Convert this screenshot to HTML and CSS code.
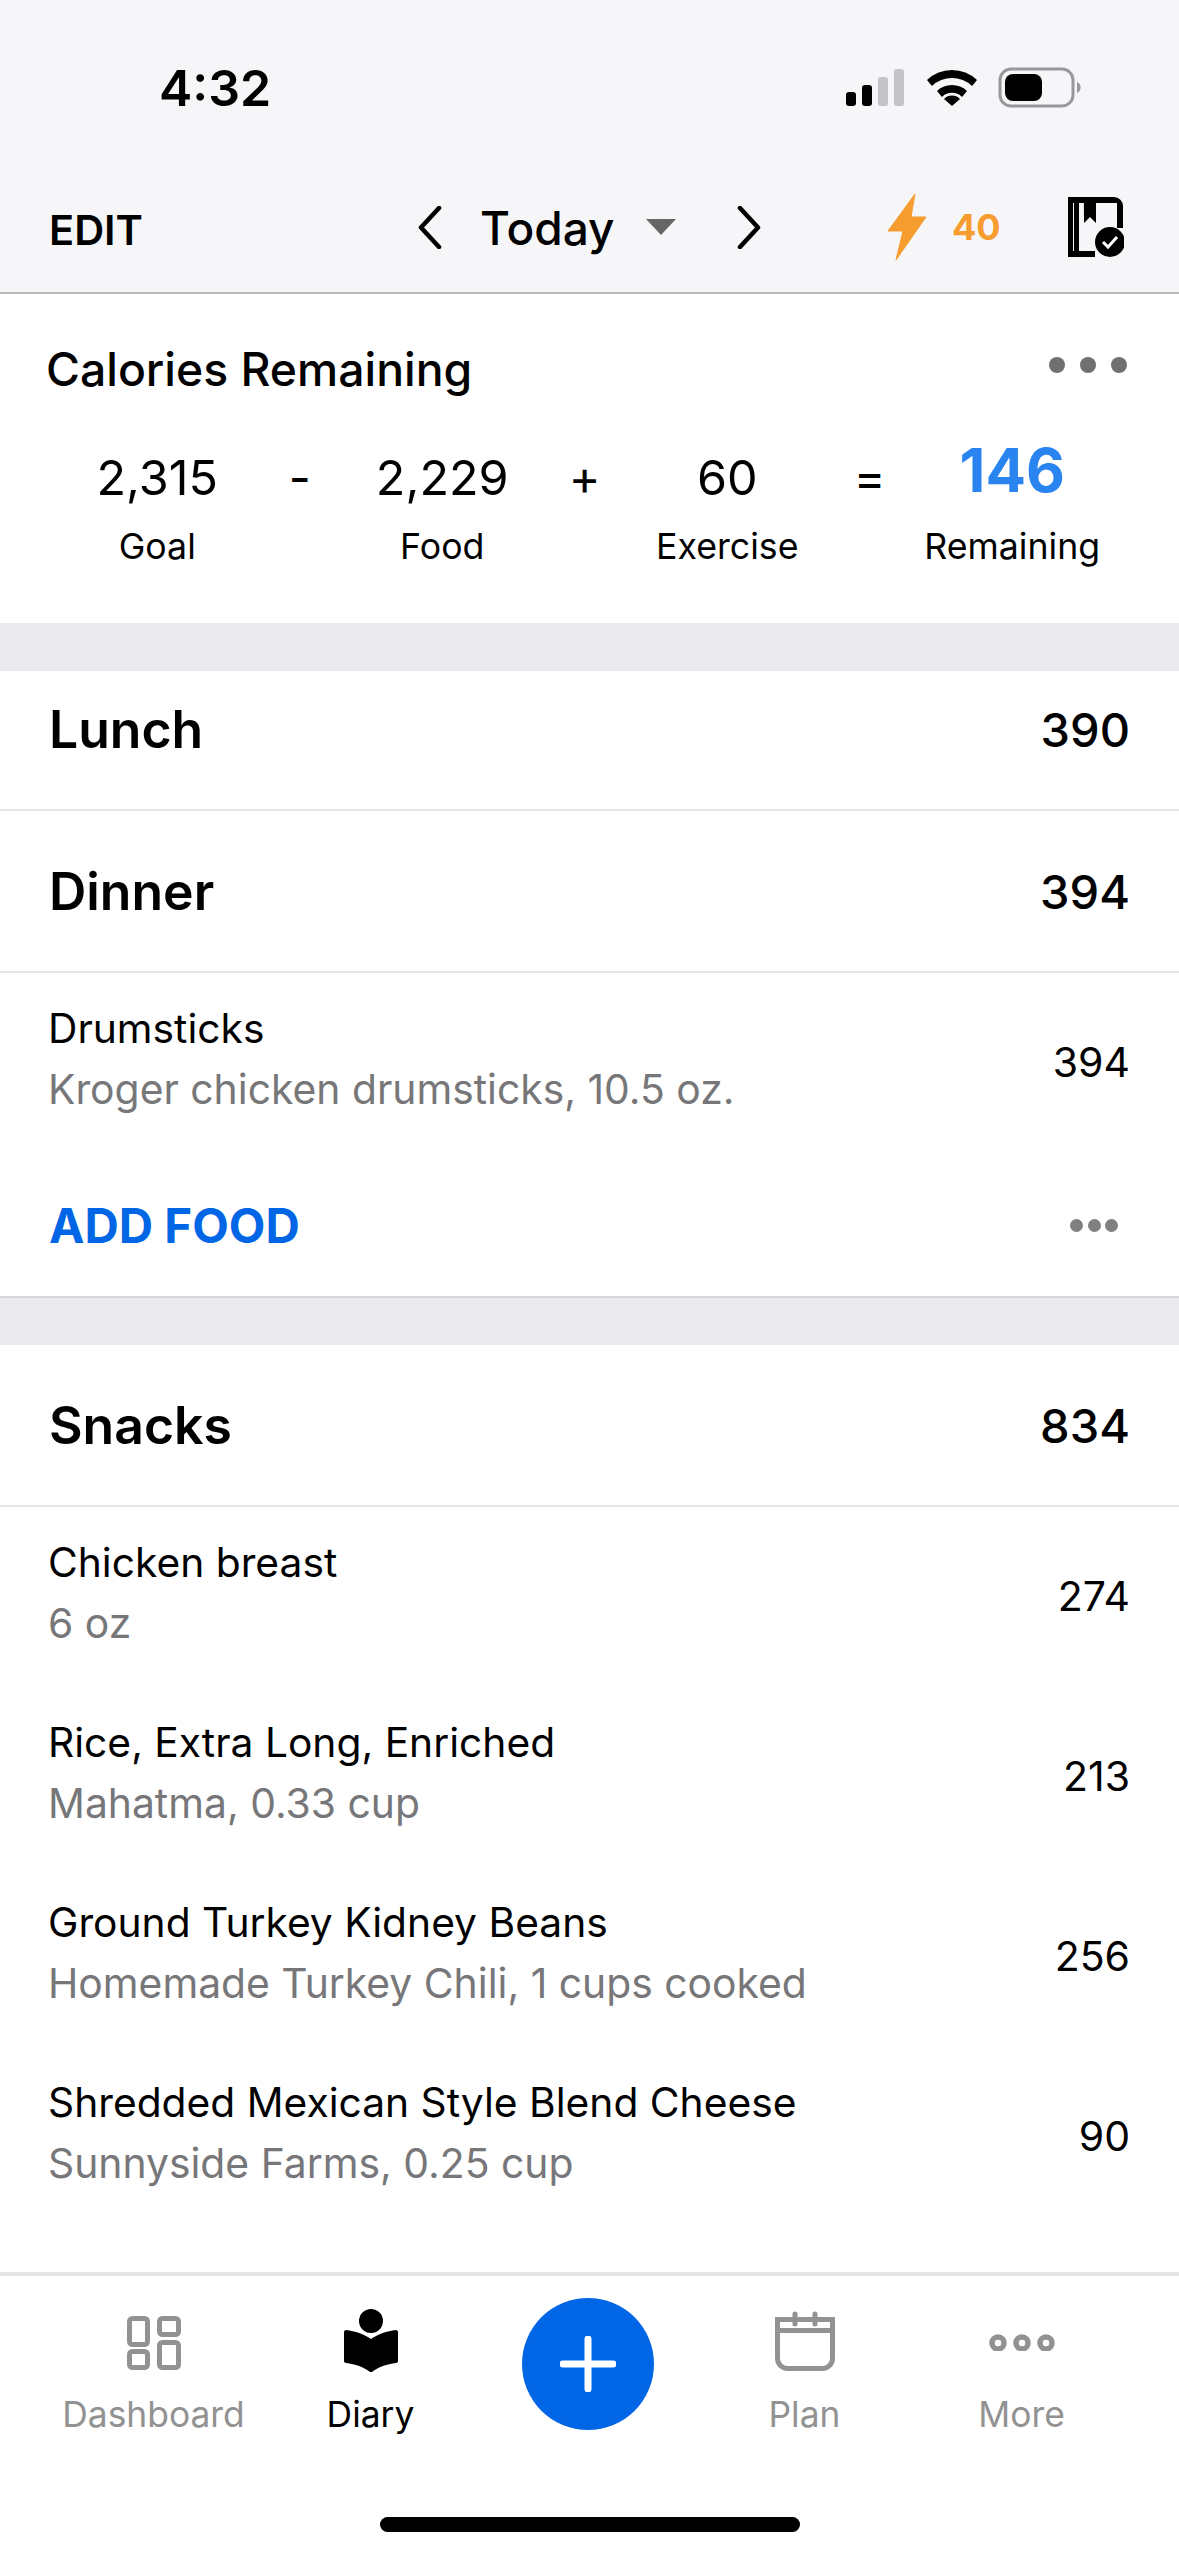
FILE: index.html
```html
<!DOCTYPE html>
<html lang="en">
<head>
  <meta charset="UTF-8">
  <title>Diary</title>
  <link rel="stylesheet" href="styles.css">
</head>
<body>
  <header class="top">
    <div class="status">
      <span class="time">4:32</span>
      <svg class="status-icons" width="240" height="42" viewBox="846 67 240 42">
        <rect x="846" y="92" width="10" height="14" rx="3" fill="#000"/>
        <rect x="862" y="85" width="10" height="21" rx="3" fill="#000"/>
        <rect x="878" y="77" width="10" height="29" rx="3" fill="#c4c4c6"/>
        <rect x="894" y="69" width="10" height="37" rx="3" fill="#c4c4c6"/>
        <path d="M927 80a36 36 0 0 1 50 0l-5 6a29 29 0 0 0-40 0zM937 91a22 22 0 0 1 30 0l-5 6a14 14 0 0 0-20 0zM952 106l-8-7a11 11 0 0 1 16 0z" fill="#000"/>
        <rect x="1000" y="69" width="73" height="37" rx="11" fill="none" stroke="#98989b" stroke-width="3"/>
        <rect x="1005" y="74" width="37" height="27" rx="8" fill="#000"/>
        <path d="M1077 82a6 6 0 0 1 0 11z" fill="#98989b"/>
      </svg>
    </div>
    <div class="bar">
      <span class="edit">EDIT</span>
      <svg class="chev-left" width="25" height="43" viewBox="0 0 25 43"><path d="M22 2 4 21.500 22 41" fill="none" stroke="#000" stroke-width="4.500" stroke-linecap="round" stroke-linejoin="round"/></svg>
      <span class="today">Today</span>
      <span class="caret"></span>
      <svg class="chev-right" width="25" height="43" viewBox="0 0 25 43"><path d="M3 2 21 21.500 3 41" fill="none" stroke="#000" stroke-width="4.500" stroke-linecap="round" stroke-linejoin="round"/></svg>
      <svg class="bolt" width="40" height="66" viewBox="0 0 40 66"><path d="M28 0 1 37h15L9 66l30-43H24z" fill="#f79c2e" stroke="#f79c2e" stroke-width="1" stroke-linejoin="round"/></svg>
      <span class="streak">40</span>
      <svg class="plan-icon" width="56" height="60" viewBox="0 0 56 60">
        <path d="M0 0h46a9 9 0 0 1 9 9v22h-6V6H28v20l-6-6-6 6-.1-20H11v48h16v6H0zM5 6v48h1V6z" fill="#000" fill-rule="evenodd"/>
        <circle cx="42" cy="45" r="15" fill="#000"/>
        <path d="M35 45l5 5 9-10" fill="none" stroke="#fff" stroke-width="3"/>
      </svg>
    </div>
  </header>

  <section class="summary">
    <div class="summary-head">
      <span class="summary-title">Calories Remaining</span>
      <span class="dots"><i></i><i></i><i></i></span>
    </div>
    <div class="calc">
      <div class="calc-col"><span class="num">2,315</span><span class="lbl">Goal</span></div>
      <div class="calc-op">-</div>
      <div class="calc-col"><span class="num">2,229</span><span class="lbl">Food</span></div>
      <div class="calc-op">+</div>
      <div class="calc-col"><span class="num">60</span><span class="lbl">Exercise</span></div>
      <div class="calc-op">=</div>
      <div class="calc-col"><span class="num remaining">146</span><span class="lbl">Remaining</span></div>
    </div>
  </section>

  <div class="gap"></div>

  <main class="diary">
    <div class="meal meal-first"><span>Lunch</span><span class="meal-cal">390</span></div>
    <div class="meal"><span>Dinner</span><span class="meal-cal">394</span></div>
    <div class="items">
      <div class="item">
        <div><div class="item-name">Drumsticks</div><div class="item-sub">Kroger chicken drumsticks, 10.5 oz.</div></div>
        <span class="item-cal">394</span>
      </div>
    </div>
    <div class="add">
      <span class="add-link">ADD FOOD</span>
      <span class="dots dots-small"><i></i><i></i><i></i></span>
    </div>
    <div class="gap gap-ruled"></div>
    <div class="meal"><span>Snacks</span><span class="meal-cal">834</span></div>
    <div class="items">
      <div class="item">
        <div><div class="item-name">Chicken breast</div><div class="item-sub">6 oz</div></div>
        <span class="item-cal">274</span>
      </div>
      <div class="item">
        <div><div class="item-name">Rice, Extra Long, Enriched</div><div class="item-sub">Mahatma, 0.33 cup</div></div>
        <span class="item-cal">213</span>
      </div>
      <div class="item">
        <div><div class="item-name">Ground Turkey Kidney Beans</div><div class="item-sub">Homemade Turkey Chili, 1 cups cooked</div></div>
        <span class="item-cal">256</span>
      </div>
      <div class="item">
        <div><div class="item-name">Shredded Mexican Style Blend Cheese</div><div class="item-sub">Sunnyside Farms, 0.25 cup</div></div>
        <span class="item-cal">90</span>
      </div>
    </div>
  </main>

  <nav class="tabs">
    <div class="tab">
      <svg class="tab-icon" width="62" height="64" viewBox="0 0 62 64">
        <g fill="none" stroke="#929292" stroke-width="5">
          <rect x="6.500" y="9.500" width="18" height="26" rx="3"/>
          <rect x="6.500" y="42.500" width="18" height="16" rx="3"/>
          <rect x="36.500" y="9.500" width="19" height="16" rx="3"/>
          <rect x="36.500" y="33.500" width="19" height="25" rx="3"/>
        </g>
      </svg>
      <span>Dashboard</span>
    </div>
    <div class="tab tab-active">
      <svg class="tab-icon" width="62" height="64" viewBox="0 0 62 64">
        <circle cx="31" cy="12" r="12" fill="#000"/>
        <path d="M4 23c0-1 1-2 2-2 9 1 18 4 25 9 7-5 16-8 25-9 1 0 2 1 2 2v29c0 1-1 2-2 2-9 1-18 4-24 9h-2C24 58 15 55 6 54c-1 0-2-1-2-2z" fill="#000"/>
      </svg>
      <span>Diary</span>
    </div>
    <div class="tab tab-add">
      <button class="add-btn"><svg width="56" height="56" viewBox="0 0 56 56"><path d="M28 3v50M3 28h50" stroke="#fff" stroke-width="7" stroke-linecap="round"/></svg></button>
    </div>
    <div class="tab">
      <svg class="tab-icon" width="62" height="64" viewBox="0 0 62 64">
        <g fill="none" stroke="#929292" stroke-width="5">
          <path d="M3.500 10.500h55v39a10 10 0 0 1-10 10h-35a10 10 0 0 1-10-10z"/>
          <path d="M3.500 21.500h55"/>
          <path d="M21 5v10M41 5v10" stroke-linecap="round"/>
        </g>
      </svg>
      <span>Plan</span>
    </div>
    <div class="tab">
      <svg class="tab-icon" width="70" height="64" viewBox="0 0 70 64">
        <g fill="none" stroke="#929292" stroke-width="5.500">
          <circle cx="11" cy="34" r="6"/>
          <circle cx="35" cy="34" r="6"/>
          <circle cx="59" cy="34" r="6"/>
        </g>
        <rect y="42" width="70" height="6" fill="#fff"/>
      </svg>
      <span>More</span>
    </div>
  </nav>
  <div class="home-area"><div class="home-bar"></div></div>
</body>
</html>
```

FILE: styles.css
```css
* {
  box-sizing: border-box;
}
body {
  margin: 0;
  width: 1179px;
  height: 2556px;
  overflow: hidden;
  display: flex;
  flex-direction: column;
  background: #fff;
  color: #000;
  font-family: Inter, "Liberation Sans", sans-serif;
}

/* status + date bar */
.top {
  height: 294px;
  background: #f6f6f9;
  border-bottom: 2px solid #b9b9bb;
}
.status {
  height: 170px;
  padding: 67px 0 0 159px;
  display: flex;
  align-items: flex-start;
}
.time {
  font-size: 50px;
  font-weight: 600;
  line-height: 42px;
}
.status-icons {
  margin-left: 575px;
}
.bar {
  display: flex;
  align-items: center;
  height: 66px;
  margin-top: 24px;
  padding-left: 49px;
}
.edit {
  font-size: 41.500px;
  font-weight: 600;
  width: 368px;
  padding-top: 5px;
}
.today {
  font-size: 46px;
  font-weight: 500;
  margin-left: 38px;
  width: 166px;
  padding-top: 2px;
}
.caret {
  width: 0;
  height: 0;
  border-left: 15px solid transparent;
  border-right: 15px solid transparent;
  border-top: 16px solid #666;
}
.chev-right {
  margin-left: 61px;
}
.bolt {
  margin-left: 125px;
}
.streak {
  font-size: 36px;
  font-weight: 700;
  color: #f79c2e;
  margin-left: 25px;
  width: 116px;
}

/* calories summary */
.summary {
  height: 329px;
}
.summary-head {
  display: flex;
  justify-content: space-between;
  align-items: center;
  padding: 47px 52px 0 46px;
}
.summary-title {
  font-size: 46.300px;
  font-weight: 500;
}
.dots {
  display: flex;
  gap: 15px;
  margin-bottom: 8px;
}
.dots i {
  width: 16px;
  height: 16px;
  border-radius: 50%;
  background: #707070;
}
.dots-small {
  gap: 4.500px;
  margin-bottom: 0;
}
.dots-small i {
  width: 13px;
  height: 13px;
  background: #808080;
}
.calc {
  display: grid;
  grid-template-columns: repeat(7, 142.5px);
  padding: 45px 0 0 86px;
}
.calc-col {
  display: flex;
  flex-direction: column;
  align-items: center;
  white-space: nowrap;
}
.num {
  font-size: 48.500px;
  height: 72px;
  line-height: 72px;
}
.remaining {
  font-size: 60px;
  font-weight: 700;
  color: #2a84f0;
  line-height: 56px;
}
.lbl {
  font-size: 35.700px;
  margin-top: 10px;
}
.calc-op {
  font-size: 48px;
  line-height: 72px;
  text-align: center;
}
.gap {
  height: 48px;
  flex: none;
  background: #e9e9ee;
}
.gap-ruled {
  border-top: 2px solid #d6d6da;
  height: 49px;
}

/* meals */
.diary {
  flex: 1;
}
.meal {
  display: flex;
  justify-content: space-between;
  align-items: center;
  height: 162px;
  padding: 0 49px;
  font-size: 51.700px;
  font-weight: 600;
  border-bottom: 2px solid #e4e4e6;
}
.meal-first {
  height: 140px;
  padding-bottom: 22px;
}
.meal-cal {
  font-size: 47px;
  font-weight: 500;
}
.items {
  display: flex;
  flex-direction: column;
  gap: 30px;
  padding-top: 11px;
}
.item {
  display: flex;
  justify-content: space-between;
  align-items: center;
  height: 150px;
  padding: 0 49px 0 48px;
}
.item-name {
  font-size: 40.750px;
  line-height: 60px;
}
.item-sub {
  font-size: 40.850px;
  line-height: 60px;
  color: #77777a;
}
.item-cal {
  font-size: 41px;
  padding-top: 6px;
}
.add {
  display: flex;
  justify-content: space-between;
  align-items: center;
  height: 162px;
  padding: 20px 61px 0 49px;
}
.add-link {
  font-size: 47.500px;
  font-weight: 700;
  color: #0066e6;
}

/* tab bar */
.tabs {
  height: 202px;
  flex: none;
  display: grid;
  grid-template-columns: repeat(5, 217px);
  padding: 33px 0 0 45px;
  border-top: 4px solid #e5e5e7;
}
.tab {
  display: flex;
  flex-direction: column;
  align-items: center;
  font-size: 35.400px;
  color: #929292;
}
.tab-icon {
  display: block;
  margin-bottom: 20px;
}
.tab-active {
  color: #000;
}
.add-btn {
  width: 132px;
  height: 132px;
  margin-top: -11px;
  padding: 0;
  border: 0;
  border-radius: 50%;
  background: #0066e6;
  display: flex;
  align-items: center;
  justify-content: center;
}
.home-area {
  height: 82px;
  flex: none;
  padding-top: 43px;
}
.home-bar {
  width: 420px;
  height: 15px;
  margin: 0 auto;
  border-radius: 8px;
  background: #000;
}
```
